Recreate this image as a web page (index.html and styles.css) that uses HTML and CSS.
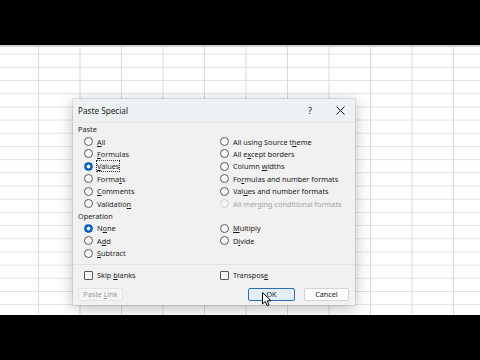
FILE: index.html
```html
<!DOCTYPE html>
<html>
<head>
<meta charset="utf-8">
<link rel="stylesheet" href="styles.css">
</head>
<body>
<div class="screen">
  <div class="sheet">
    <div class="dialog">
      <div class="titlebar">
        <span class="title">Paste Special</span>
        <span class="help">?</span>
        <span class="close"><svg width="9" height="9" viewBox="0 0 9 9"><path d="M0.5 0.5L8.5 8.5M8.5 0.5L0.5 8.5" stroke="#222" stroke-width="1"/></svg></span>
      </div>
      <div class="body">
        <div class="label">Paste</div>
        <div class="opts">
          <div class="opt"><span class="radio"></span><span><u>A</u>ll</span></div>
          <div class="opt"><span class="radio"></span><span>All using Source t<u>h</u>eme</span></div>
          <div class="opt"><span class="radio"></span><span><u>F</u>ormulas</span></div>
          <div class="opt"><span class="radio"></span><span>All e<u>x</u>cept borders</span></div>
          <div class="opt"><span class="radio on"></span><span class="focus"><u>V</u>alues</span></div>
          <div class="opt"><span class="radio"></span><span>Column <u>w</u>idths</span></div>
          <div class="opt"><span class="radio"></span><span>Forma<u>t</u>s</span></div>
          <div class="opt"><span class="radio"></span><span>Fo<u>r</u>mulas and number formats</span></div>
          <div class="opt"><span class="radio"></span><span><u>C</u>omments</span></div>
          <div class="opt"><span class="radio"></span><span>Val<u>u</u>es and number formats</span></div>
          <div class="opt"><span class="radio"></span><span>Validatio<u>n</u></span></div>
          <div class="opt disabled"><span class="radio"></span><span>All merging conditional formats</span></div>
        </div>
        <div class="label">Operation</div>
        <div class="opts">
          <div class="opt"><span class="radio on"></span><span>N<u>o</u>ne</span></div>
          <div class="opt"><span class="radio"></span><span><u>M</u>ultiply</span></div>
          <div class="opt"><span class="radio"></span><span>A<u>d</u>d</span></div>
          <div class="opt"><span class="radio"></span><span>D<u>i</u>vide</span></div>
          <div class="opt"><span class="radio"></span><span><u>S</u>ubtract</span></div>
          <div class="opt"></div>
        </div>
        <div class="sep"></div>
        <div class="opts">
          <div class="opt"><span class="check"></span><span>Skip <u>b</u>lanks</span></div>
          <div class="opt"><span class="check"></span><span>Transpos<u>e</u></span></div>
        </div>
        <div class="buttons">
          <span class="btn disabled"><span>Paste <u>L</u>ink</span></span>
          <span class="spacer"></span>
          <span class="btn primary"><span>OK</span>
            <svg class="cursor" width="10" height="15" viewBox="0 0 10 15"><path d="M0.5 0.5L0.5 12L3.3 9.4L5.2 13.8L7 13L5.2 8.8L9 8.8Z" fill="#fff" stroke="#000" stroke-width="1" stroke-linejoin="round"/></svg>
          </span>
          <span class="btn"><span>Cancel</span></span>
        </div>
      </div>
    </div>
  </div>
</div>
</body>
</html>
```

FILE: styles.css
```css
html, body {
  margin: 0;
  padding: 0;
  background: #000;
}
.screen {
  width: 480px;
  height: 360px;
  padding-top: 45px;
  box-sizing: border-box;
  background: #000;
}
.sheet {
  height: 270px;
  box-sizing: border-box;
  padding: 54px 0 0 73px;
  border-top: 2px solid #d2d2d2;
  background-color: #ffffff;
  background-image:
    linear-gradient(to right, transparent 40.5px, #dadada 40.5px, #dadada 41.5px),
    linear-gradient(to bottom, transparent 12.2px, #e2e2e2 12.2px, #e2e2e2 13.2px);
  background-size: 41.5px 100%, 100% 13.2px;
  background-position: -2.5px 0, 0 -5.6px;
}
.dialog {
  width: 282px;
  height: 206px;
  margin-top: -2px;
  background: #f1f1f1;
  box-shadow: 0 3px 14px rgba(0, 0, 0, 0.28), 0 0 0 1px rgba(0, 0, 0, 0.08);
  font-family: "Noto Sans", "Open Sans", sans-serif;
  font-size: 7.3px;
  color: #1b1b1b;
  display: flex;
  flex-direction: column;
}
.titlebar {
  height: 23px;
  display: flex;
  align-items: center;
  padding: 0 0 0 5px;
  background: #eef1f3;
  border-bottom: 1px solid #e6e6e6;
}
.title {
  font-size: 8.2px;
  flex: 1;
}
.help {
  font-size: 9px;
  width: 16px;
  margin-right: 7px;
  text-align: center;
}
.close {
  width: 30px;
  display: flex;
  justify-content: center;
}
.body {
  padding: 0 6px 0 5px;
  display: flex;
  flex-direction: column;
}
.label {
  height: 12.4px;
  line-height: 12.4px;
}
.opts {
  display: grid;
  grid-template-columns: 136px 1fr;
  grid-auto-rows: 12.4px;
  padding-left: 6px;
}
.opt {
  display: flex;
  align-items: center;
  gap: 4px;
  white-space: nowrap;
}
.opt u, .btn u {
  text-decoration-thickness: 0.5px;
  text-underline-offset: 1px;
}
.radio {
  width: 7px;
  height: 7px;
  border: 1px solid #5b5b5b;
  border-radius: 50%;
  background: #f7f7f7;
  flex: none;
}
.radio.on {
  border-color: #005fb8;
  background: radial-gradient(circle, #ffffff 0 1.8px, #005fb8 2.2px);
}
.disabled {
  color: #a3a3a3;
}
.disabled .radio {
  border-color: #cfcfcf;
  background: #f3f3f3;
}
.focus {
  outline: 1px dotted #333;
  outline-offset: 0;
}
.sep {
  height: 1px;
  background: #e2e2e2;
  margin: 5px -6px 4px -5px;
}
.check {
  width: 7px;
  height: 7px;
  border: 1px solid #5b5b5b;
  border-radius: 1px;
  background: #f7f7f7;
  flex: none;
}
.buttons {
  display: flex;
  margin-top: 6px;
  gap: 9px;
}
.spacer {
  flex: 1;
}
.btn {
  width: 45px;
  height: 13px;
  box-sizing: border-box;
  border: 1px solid #d3d3d3;
  border-radius: 2px;
  background: #fdfdfd;
  display: flex;
  align-items: center;
  justify-content: center;
  font-size: 7.2px;
  white-space: nowrap;
  position: relative;
}
.btn.disabled {
  background: #f5f5f5;
  border-color: #e3e3e3;
  color: #9a9a9a;
}
.btn.primary {
  width: 47px;
  background: #e3eef8;
  border: 1.5px solid #2d6fb6;
}
.cursor {
  position: absolute;
  left: 13px;
  top: 3px;
}
```
